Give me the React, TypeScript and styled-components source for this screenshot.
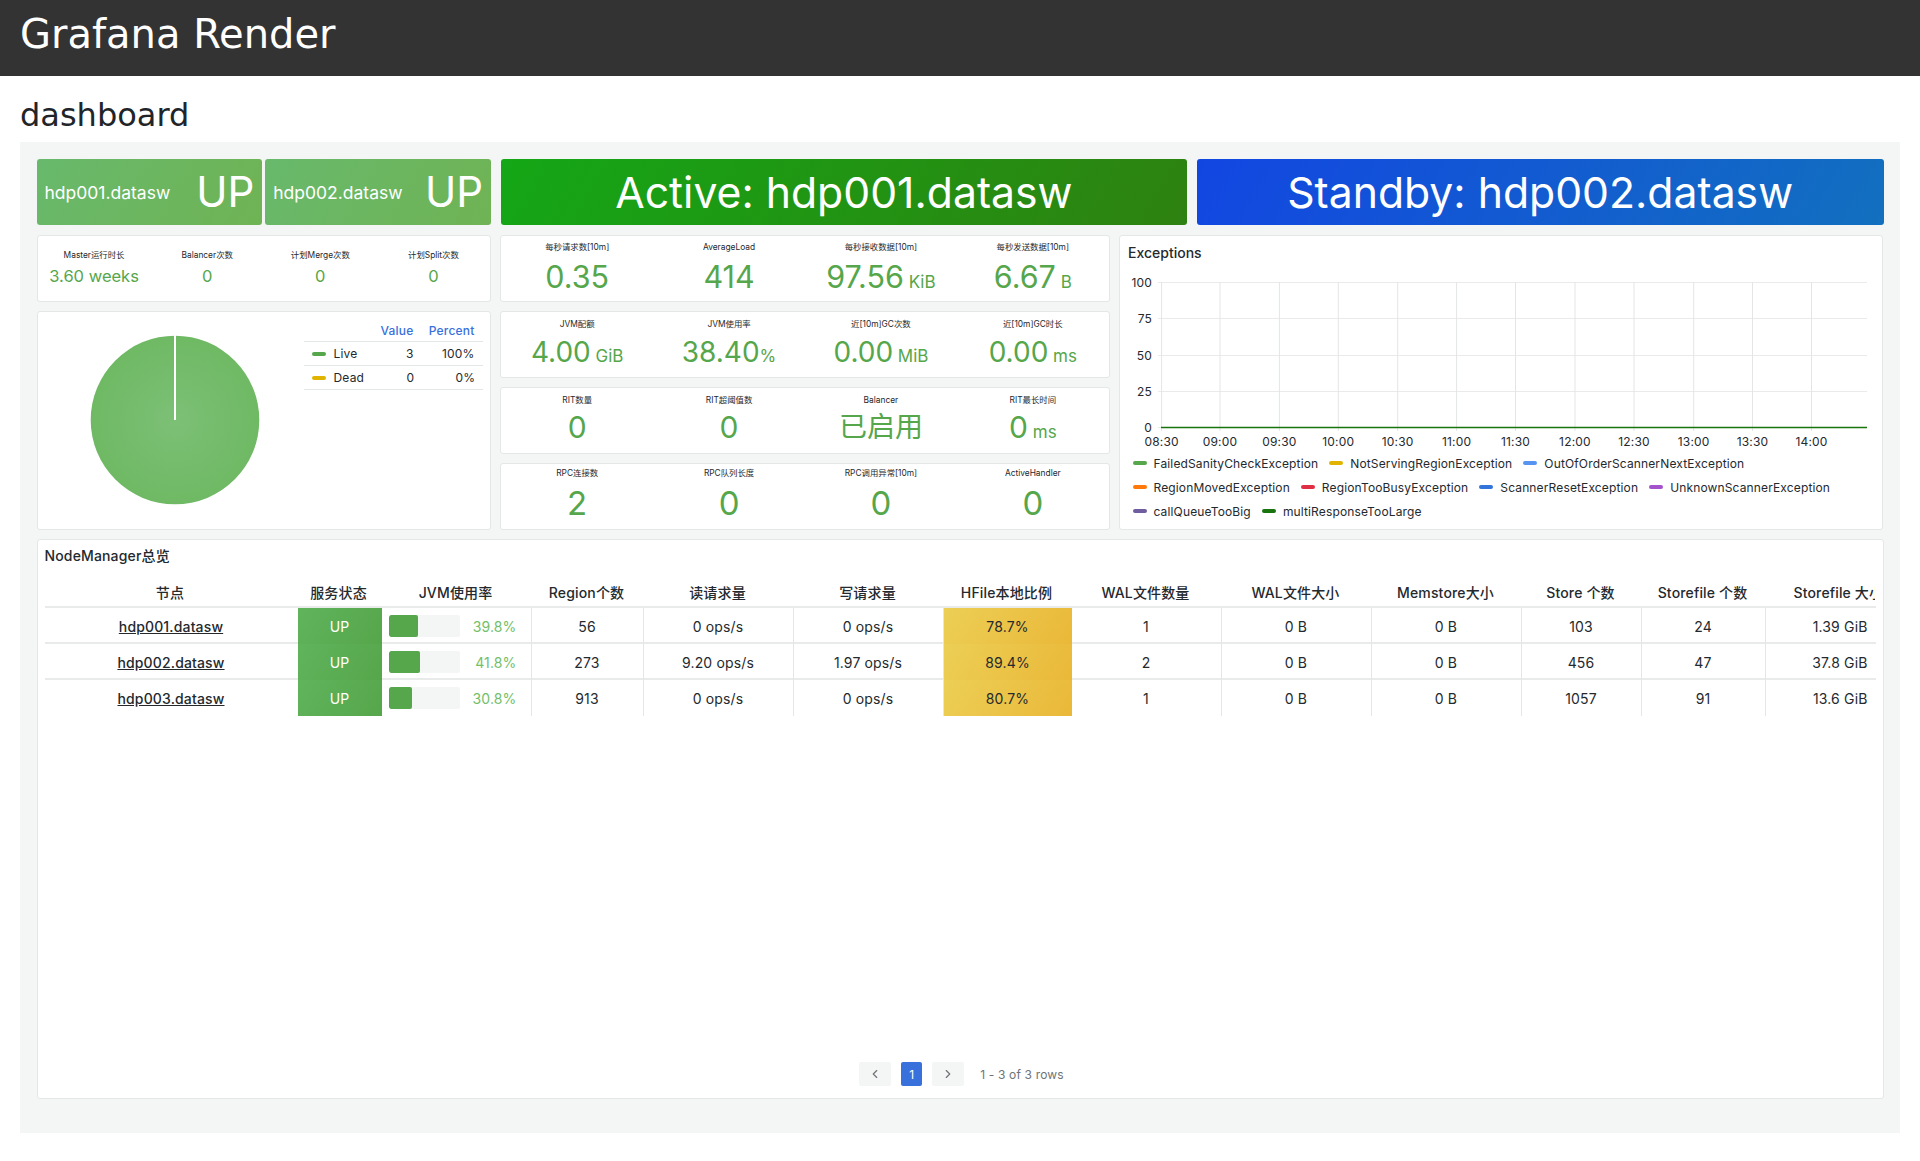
import React from 'react';
import styled, { createGlobalStyle } from 'styled-components';
import { ChevronLeft, ChevronRight } from 'lucide-react';

const GlobalStyle = createGlobalStyle`
  html, body {
    margin: 0;
    padding: 0;
    background: #fff;
  }
  body {
    font-family: Inter, "Noto Sans CJK SC", sans-serif;
    color: #24292e;
  }
  * {
    box-sizing: border-box;
  }
`;

const Page = styled.div`
  width: 1920px;
  height: 1161px;
  overflow: hidden;
`;

const TopBar = styled.header`
  height: 76px;
  background: #333;
  color: #fff;
  padding: 0 20px;
  font: 40px/68px "DejaVu Sans", sans-serif;
`;

const Heading = styled.h2`
  margin: 0;
  height: 66px;
  padding: 20px 20px 0;
  font: 32px/38px "DejaVu Sans", sans-serif;
  color: #212529;
`;

const Board = styled.main`
  margin: 0 20px;
  height: 991px;
  background: #f4f5f5;
  padding: 17px 16.5px 0;
  display: flex;
  flex-direction: column;
  gap: 9.5px;
`;

const TopRow = styled.div`
  display: flex;
  gap: 9.5px;
  height: 66px;
`;

const HostGroup = styled.div`
  width: 454.5px;
  display: flex;
  gap: 3px;
`;

const HostTile = styled.div`
  flex: 1;
  display: flex;
  align-items: center;
  justify-content: space-between;
  padding: 0 8px 0 8px;
  border-radius: 3px;
  color: #fff;
  background: linear-gradient(120deg, #68b96c, #6fb354);
`;

const HostName = styled.span`
  font-size: 17.5px;
`;

const HostState = styled.span`
  font-size: 42px;
  line-height: 48px;
`;

const RoleTile = styled.div<{ $from: string; $to: string }>`
  flex: 1;
  display: flex;
  align-items: center;
  justify-content: center;
  border-radius: 3px;
  color: #fff;
  font-size: 42.7px;
  background: linear-gradient(120deg, ${(p) => p.$from}, ${(p) => p.$to});
`;

const MidGrid = styled.div`
  display: grid;
  grid-template-columns: 454.5px 609.5px 764px;
  column-gap: 9.25px;
  height: 295px;
`;

const Column = styled.div<{ $gap: number }>`
  display: flex;
  flex-direction: column;
  gap: ${(p) => p.$gap}px;
`;

const Panel = styled.section`
  background: #fff;
  border: 1px solid #e4e7e7;
  border-radius: 3px;
`;

const StatRow = styled(Panel)<{ $height: number; $pad: number }>`
  height: ${(p) => p.$height}px;
  padding-top: ${(p) => p.$pad}px;
  display: grid;
  grid-template-columns: repeat(4, 1fr);
  text-align: center;
`;

const StatCell = styled.div`
  display: flex;
  flex-direction: column;
  align-items: center;
`;

const StatTitle = styled.div`
  font-size: 8.4px;
  line-height: 12px;
  white-space: nowrap;
  color: #24292e;
`;

const StatValue = styled.div<{ $size: number; $gap: number }>`
  margin-top: ${(p) => p.$gap}px;
  font-size: ${(p) => p.$size}px;
  line-height: 36px;
  color: #56a64b;
  white-space: nowrap;
`;

const Unit = styled.span`
  font-size: 17px;
`;

const PiePanel = styled(Panel)`
  flex: 1;
  position: relative;
  display: flex;
`;

const PieBox = styled.div`
  width: 266px;
  padding: 23px 0 0 52px;
`;

const LegendTable = styled.div`
  width: 179px;
  margin-top: 11px;
  font-size: 12px;
  letter-spacing: 0.2px;
`;

const LegendHead = styled.div`
  display: grid;
  grid-template-columns: 1fr 50px 61px;
  height: 19px;
  line-height: 15px;
  padding-right: 8px;
  text-align: right;
  color: #3871dc;
  font-weight: 500;
  border-bottom: 1px solid #e4e7e7;
`;

const LegendRow = styled.div`
  display: grid;
  grid-template-columns: 1fr 50px 61px;
  align-items: center;
  height: 24px;
  padding: 0 8px 0 8px;
  text-align: right;
  border-bottom: 1px solid #e4e7e7;
`;

const SeriesName = styled.span`
  display: flex;
  align-items: center;
  gap: 8px;
  text-align: left;
`;

const Swatch = styled.i<{ $color: string }>`
  display: block;
  width: 14px;
  height: 4px;
  border-radius: 3px;
  background: ${(p) => p.$color};
`;

const ChartPanel = styled(Panel)`
  display: flex;
  flex-direction: column;
`;

const ChartTitle = styled.div`
  height: 33.5px;
  padding: 8px 0 0 8px;
  font-size: 14px;
  line-height: 17px;
  font-weight: 500;
`;

const ChartSvg = styled.svg`
  display: block;
  width: 762px;
  height: 182px;
  font-family: Inter, sans-serif;
  font-size: 12px;
  letter-spacing: 0.2px;
  fill: #24292e;
`;

const ChartLegend = styled.div`
  display: flex;
  flex-wrap: wrap;
  padding-left: 12.5px;
  column-gap: 11px;
  font-size: 12px;
  letter-spacing: 0.14px;
`;

const ChartLegendItem = styled.span`
  display: flex;
  align-items: center;
  gap: 7px;
  height: 24px;
  white-space: nowrap;
`;

const TablePanel = styled(Panel)`
  height: 560px;
  padding: 0 7px 12px;
  display: flex;
  flex-direction: column;
`;

const TableTitle = styled.div`
  height: 38px;
  padding-top: 7px;
  font-size: 14px;
  line-height: 17px;
  font-weight: 500;
  letter-spacing: 0.15px;
`;

const columns = '253px 84px 150px 112px 150px 150px 128px 150px 150px 150px 120px 124px 109px';

const HeadRow = styled.div`
  display: grid;
  grid-template-columns: ${columns};
  height: 30px;
  align-items: center;
  border-bottom: 2px solid #e9ebeb;
  font-size: 14px;
  font-weight: 500;
  letter-spacing: 0.15px;
  text-align: center;
`;

const HeadCell = styled.div`
  padding-right: 2px;
  white-space: nowrap;
`;

const ClippedHeadCell = styled(HeadCell)`
  overflow: hidden;
  text-align: left;
  padding: 0 0 0 28px;
`;

const TableBody = styled.div`
  font-size: 14px;
  letter-spacing: 0.15px;
`;

const BodyRow = styled.div`
  display: grid;
  grid-template-columns: ${columns};
  height: 36px;
  box-shadow: inset 0 -2px #e9ebeb;

  &:last-child {
    box-shadow: none;
  }
`;

const Cell = styled.div`
  display: flex;
  align-items: center;
  justify-content: center;
  border-right: 1px solid #e4e7e7;
`;

const NodeCell = styled(Cell)`
  border-right: 0;
  font-weight: 500;
  text-decoration: underline;
`;

const StatusCell = styled(Cell)`
  border-right: 0;
  color: #fff;
  background: linear-gradient(120deg, #60b45c, #56a64b);
`;

const LocalityCell = styled(Cell)`
  border-right: 0;
  background: linear-gradient(120deg, #eccf55, #eab839);
`;

const LastCell = styled(Cell)`
  justify-content: flex-end;
  border-right: 0;
  padding-right: 7px;
`;

const GaugeCell = styled(Cell)`
  justify-content: flex-start;
  padding: 0 14px 0 7px;
  gap: 6px;
`;

const GaugeTrack = styled.div`
  width: 71px;
  height: 22px;
  flex: none;
  background: #f4f5f5;
  border-radius: 2px;
  overflow: hidden;
`;

const GaugeFill = styled.div`
  height: 100%;
  background: #56a64b;
  border-radius: 2px;
`;

const GaugeValue = styled.span`
  flex: 1;
  text-align: right;
  color: #73bf69;
`;

const Spacer = styled.div`
  flex: 1;
`;

const Pager = styled.nav`
  display: flex;
  align-items: center;
  justify-content: center;
  gap: 10px;
  height: 24px;
  padding-left: 3px;
  font-size: 12px;
  letter-spacing: 0.15px;
`;

const PageArrow = styled.span`
  width: 32px;
  height: 24px;
  display: flex;
  align-items: center;
  justify-content: center;
  background: #f4f5f5;
  border-radius: 2px;
  color: #6e7378;
`;

const PageNumber = styled.span`
  width: 21px;
  height: 24px;
  display: flex;
  align-items: center;
  justify-content: center;
  background: #3871dc;
  border-radius: 2px;
  color: #fff;
`;

const PageInfo = styled.span`
  margin-left: 6px;
  color: #6e7378;
`;

type Stat = { title: string; value: string; unit?: string; size?: number };

const masterStats: Stat[] = [
  { title: 'Master运行时长', value: '3.60 weeks' },
  { title: 'Balancer次数', value: '0' },
  { title: '计划Merge次数', value: '0' },
  { title: '计划Split次数', value: '0' },
];

const statRows: { pad: number; gap: number; size: number; stats: Stat[] }[] = [
  {
    pad: 5,
    gap: 6,
    size: 30.5,
    stats: [
      { title: '每秒请求数[10m]', value: '0.35' },
      { title: 'AverageLoad', value: '414' },
      { title: '每秒接收数据[10m]', value: '97.56', unit: ' KiB' },
      { title: '每秒发送数据[10m]', value: '6.67', unit: ' B' },
    ],
  },
  {
    pad: 6,
    gap: 4,
    size: 28,
    stats: [
      { title: 'JVM配额', value: '4.00', unit: ' GiB' },
      { title: 'JVM使用率', value: '38.40', unit: '%' },
      { title: '近[10m]GC次数', value: '0.00', unit: ' MiB' },
      { title: '近[10m]GC时长', value: '0.00', unit: ' ms' },
    ],
  },
  {
    pad: 6,
    gap: 3,
    size: 30,
    stats: [
      { title: 'RIT数量', value: '0' },
      { title: 'RIT超阈值数', value: '0' },
      { title: 'Balancer', value: '已启用', size: 28 },
      { title: 'RIT最长时间', value: '0', unit: ' ms' },
    ],
  },
  {
    pad: 3,
    gap: 6,
    size: 33,
    stats: [
      { title: 'RPC连接数', value: '2' },
      { title: 'RPC队列长度', value: '0' },
      { title: 'RPC调用异常[10m]', value: '0' },
      { title: 'ActiveHandler', value: '0' },
    ],
  },
];

const gridX = [41.6, 100, 159.4, 218.3, 277.7, 336.6, 395.5, 455, 514, 573.7, 632.5, 691.5];
const timeLabels = ['08:30', '09:00', '09:30', '10:00', '10:30', '11:00', '11:30', '12:00', '12:30', '13:00', '13:30', '14:00'];
const gridY = [
  { y: 13.5, label: '100' },
  { y: 49.5, label: '75' },
  { y: 86.5, label: '50' },
  { y: 122.5, label: '25' },
  { y: 158.5, label: '0' },
];

const series = [
  { name: 'FailedSanityCheckException', color: '#56a64b' },
  { name: 'NotServingRegionException', color: '#e0b400' },
  { name: 'OutOfOrderScannerNextException', color: '#5794f2' },
  { name: 'RegionMovedException', color: '#ff780a' },
  { name: 'RegionTooBusyException', color: '#e02f44' },
  { name: 'ScannerResetException', color: '#3274d9' },
  { name: 'UnknownScannerException', color: '#a352cc' },
  { name: 'callQueueTooBig', color: '#705da0' },
  { name: 'multiResponseTooLarge', color: '#19730e' },
];

const headers = [
  '节点', '服务状态', 'JVM使用率', 'Region个数', '读请求量', '写请求量', 'HFile本地比例',
  'WAL文件数量', 'WAL文件大小', 'Memstore大小', 'Store 个数', 'Storefile 个数',
];

const nodes = [
  { host: 'hdp001.datasw', jvm: 39.8, regions: 56, reads: '0 ops/s', writes: '0 ops/s', local: '78.7%', wal: 1, stores: 103, files: 24, size: '1.39 GiB' },
  { host: 'hdp002.datasw', jvm: 41.8, regions: 273, reads: '9.20 ops/s', writes: '1.97 ops/s', local: '89.4%', wal: 2, stores: 456, files: 47, size: '37.8 GiB' },
  { host: 'hdp003.datasw', jvm: 30.8, regions: 913, reads: '0 ops/s', writes: '0 ops/s', local: '80.7%', wal: 1, stores: 1057, files: 91, size: '13.6 GiB' },
];

const PieChart = () => (
  <svg width="170" height="170" viewBox="0 0 170 170">
    <defs>
      <radialGradient id="pieFill">
        <stop offset="0%" stopColor="#7cc076" />
        <stop offset="100%" stopColor="#6fb964" />
      </radialGradient>
    </defs>
    <circle cx="85" cy="85" r="84.3" fill="url(#pieFill)" />
    <line x1="85" y1="0" x2="85" y2="85" stroke="#fff" strokeWidth="2" />
  </svg>
);

const ExceptionsChart = () => (
  <ChartSvg viewBox="0 0 762 182">
    {gridY.map((g) => (
      <g key={g.label}>
        <line x1="38" x2="747" y1={g.y} y2={g.y} stroke="#e9eaea" />
        <text x="32" y={g.y + 4} textAnchor="end">{g.label}</text>
      </g>
    ))}
    {gridX.map((x, i) => (
      <g key={x}>
        <line x1={x} x2={x} y1="13" y2="162" stroke="#e4e5e5" />
        <text x={x} y="177" textAnchor="middle">{timeLabels[i]}</text>
      </g>
    ))}
    <line x1="41" x2="747" y1="158.5" y2="158.5" stroke="#19730e" strokeWidth="1.5" />
  </ChartSvg>
);

const App: React.FC = () => (
  <Page>
    <GlobalStyle />
    <TopBar>Grafana Render</TopBar>
    <Heading>dashboard</Heading>
    <Board>
      <TopRow>
        <HostGroup>
          <HostTile>
            <HostName>hdp001.datasw</HostName>
            <HostState>UP</HostState>
          </HostTile>
          <HostTile>
            <HostName>hdp002.datasw</HostName>
            <HostState>UP</HostState>
          </HostTile>
        </HostGroup>
        <RoleTile $from="#14a716" $to="#2e8110">Active: hdp001.datasw</RoleTile>
        <RoleTile $from="#1246e2" $to="#1270bf">Standby: hdp002.datasw</RoleTile>
      </TopRow>

      <MidGrid>
        <Column $gap={9.5}>
          <StatRow $height={67} $pad={13}>
            {masterStats.map((s) => (
              <StatCell key={s.title}>
                <StatTitle>{s.title}</StatTitle>
                <StatValue $size={16.5} $gap={-3}>{s.value}</StatValue>
              </StatCell>
            ))}
          </StatRow>
          <PiePanel>
            <PieBox>
              <PieChart />
            </PieBox>
            <LegendTable>
              <LegendHead>
                <span />
                <span>Value</span>
                <span>Percent</span>
              </LegendHead>
              <LegendRow>
                <SeriesName><Swatch $color="#56a64b" />Live</SeriesName>
                <span>3</span>
                <span>100%</span>
              </LegendRow>
              <LegendRow>
                <SeriesName><Swatch $color="#e0b400" />Dead</SeriesName>
                <span>0</span>
                <span>0%</span>
              </LegendRow>
            </LegendTable>
          </PiePanel>
        </Column>

        <Column $gap={9}>
          {statRows.map((row) => (
            <StatRow key={row.stats[0].title} $height={67} $pad={row.pad}>
              {row.stats.map((s) => (
                <StatCell key={s.title}>
                  <StatTitle>{s.title}</StatTitle>
                  <StatValue $size={s.size ?? row.size} $gap={row.gap}>
                    {s.value}
                    {s.unit && <Unit>{s.unit}</Unit>}
                  </StatValue>
                </StatCell>
              ))}
            </StatRow>
          ))}
        </Column>

        <ChartPanel>
          <ChartTitle>Exceptions</ChartTitle>
          <ExceptionsChart />
          <ChartLegend>
            {series.map((s) => (
              <ChartLegendItem key={s.name}>
                <Swatch $color={s.color} />
                {s.name}
              </ChartLegendItem>
            ))}
          </ChartLegend>
        </ChartPanel>
      </MidGrid>

      <TablePanel>
        <TableTitle>NodeManager总览</TableTitle>
        <HeadRow>
          {headers.map((h) => (
            <HeadCell key={h}>{h}</HeadCell>
          ))}
          <ClippedHeadCell>Storefile 大小</ClippedHeadCell>
        </HeadRow>
        <TableBody>
          {nodes.map((n) => (
            <BodyRow key={n.host}>
              <NodeCell>{n.host}</NodeCell>
              <StatusCell>UP</StatusCell>
              <GaugeCell>
                <GaugeTrack>
                  <GaugeFill style={{ width: `${n.jvm * 0.75}px` }} />
                </GaugeTrack>
                <GaugeValue>{n.jvm}%</GaugeValue>
              </GaugeCell>
              <Cell>{n.regions}</Cell>
              <Cell>{n.reads}</Cell>
              <Cell>{n.writes}</Cell>
              <LocalityCell>{n.local}</LocalityCell>
              <Cell>{n.wal}</Cell>
              <Cell>0 B</Cell>
              <Cell>0 B</Cell>
              <Cell>{n.stores}</Cell>
              <Cell>{n.files}</Cell>
              <LastCell>{n.size}</LastCell>
            </BodyRow>
          ))}
        </TableBody>
        <Spacer />
        <Pager>
          <PageArrow><ChevronLeft size={14} /></PageArrow>
          <PageNumber>1</PageNumber>
          <PageArrow><ChevronRight size={14} /></PageArrow>
          <PageInfo>1 - 3 of 3 rows</PageInfo>
        </Pager>
      </TablePanel>
    </Board>
  </Page>
);

export default App;
